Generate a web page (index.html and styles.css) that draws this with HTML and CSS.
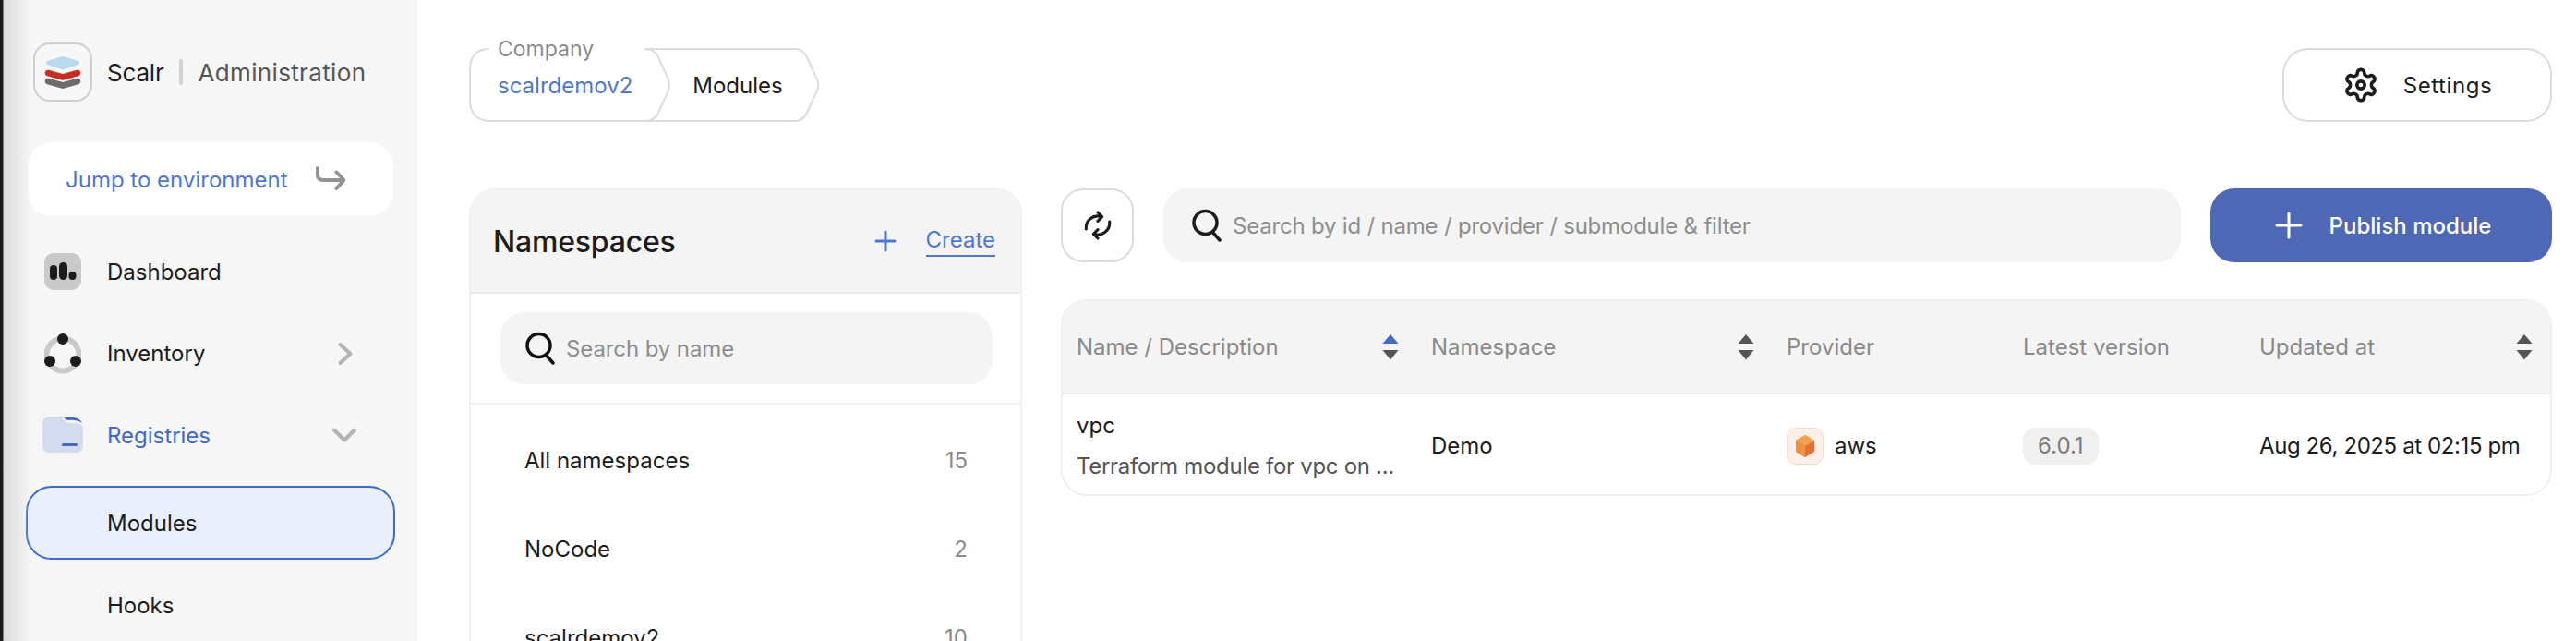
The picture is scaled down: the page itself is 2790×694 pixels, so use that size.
FILE: index.html
```html
<!DOCTYPE html>
<html lang="en">
<head>
<meta charset="utf-8">
<title>Scalr Modules</title>
<link rel="stylesheet" href="styles.css">
</head>
<body>
<aside class="sidebar">
  <div class="brand">
    <span class="logo">
      <svg width="64" height="64" viewBox="0 0 64 64">
        <path d="M32 15 L49 20 Q51.500 22 49 24 L32 29.500 L15 24 Q12.500 22 15 20 Z" fill="#b8d9ef"/>
        <path d="M16 33 L32 37.500 L48 33" fill="none" stroke="#c42f22" stroke-width="6.500" stroke-linecap="round" stroke-linejoin="round"/>
        <path d="M16 42 L32 46.500 L48 42" fill="none" stroke="#6b6b6b" stroke-width="6.500" stroke-linecap="round" stroke-linejoin="round"/>
      </svg>
    </span>
    <span class="brand-name">Scalr</span>
    <span class="brand-sep"></span>
    <span class="brand-sub">Administration</span>
  </div>
  <div class="jump">
    <span>Jump to environment</span>
    <svg width="32" height="28" viewBox="0 0 32 28" fill="none" stroke="#939393" stroke-width="4" stroke-linecap="round" stroke-linejoin="round">
      <path d="M2 2 V9 Q2 15 8 15 H30"/>
      <path d="M22.500 6.500 L30.500 15 L22.500 24"/>
    </svg>
  </div>
  <nav class="nav">
    <div class="nav-item">
      <span class="nav-icon">
        <svg width="40" height="40" viewBox="0 0 40 40">
          <rect width="40" height="40" rx="10" fill="#c9c9c9"/>
          <rect x="6" y="13" width="8" height="16" rx="4" fill="#1c1c1c"/>
          <rect x="16" y="10" width="9" height="19" rx="4.500" fill="#1c1c1c"/>
          <rect x="26.500" y="20" width="8" height="9" rx="4" fill="#1c1c1c"/>
        </svg>
      </span>
      <span class="nav-label">Dashboard</span>
    </div>
    <div class="nav-item">
      <span class="nav-icon">
        <svg width="40" height="44" viewBox="0 0 40 44">
          <circle cx="20" cy="23" r="17.500" fill="none" stroke="#c9c9c9" stroke-width="6"/>
          <circle cx="20" cy="6" r="6" fill="#1c1c1c"/>
          <circle cx="6" cy="30" r="6" fill="#1c1c1c"/>
          <circle cx="34" cy="30" r="6" fill="#1c1c1c"/>
        </svg>
      </span>
      <span class="nav-label">Inventory</span>
      <svg class="nav-caret" width="16" height="24" viewBox="0 0 16 24" fill="none" stroke="#b3b3b3" stroke-width="4" stroke-linecap="round" stroke-linejoin="round">
        <path d="M2.500 2 L13.500 12 L2.500 22"/>
      </svg>
    </div>
    <div class="nav-item nav-open">
      <span class="nav-icon">
        <svg width="44" height="40" viewBox="0 0 44 40">
          <path d="M8 0 H17 Q21 0 23 3 Q25 7 30 7 H36 Q44 7 44 15 V31 Q44 39 36 39 H8 Q0 39 0 31 V8 Q0 0 8 0 Z" fill="#d3dcee"/>
          <path d="M23 1 H33 Q40 1 43 7 Q37 3 27 4 Z" fill="#3f6bc7"/>
          <rect x="21" y="29" width="17" height="3" rx="1.500" fill="#3f6bc7"/>
        </svg>
      </span>
      <span class="nav-label nav-label-open">Registries</span>
      <svg class="nav-caret nav-caret-down" width="26" height="16" viewBox="0 0 26 16" fill="none" stroke="#b3b3b3" stroke-width="4" stroke-linecap="round" stroke-linejoin="round">
        <path d="M2 2.500 L13 13.500 L24 2.500"/>
      </svg>
    </div>
    <div class="nav-sub nav-sub-active">Modules</div>
    <div class="nav-sub">Hooks</div>
  </nav>
</aside>

<main class="main">
  <header class="topbar">
    <div class="crumbs">
      <svg class="crumbs-outline" width="380" height="80" viewBox="0 0 380 80" fill="none" stroke="#dcdcdc" stroke-width="2">
        <path d="M190 1 H352 Q362 1 366 10 L377 34 Q379 40 377 46 L366 70 Q362 79 352 79 H190"/>
        <path d="M22 1 Q1 1 1 24 V56 Q1 79 24 79 H190 Q201 79 205 70 L216 46 Q218 40 216 34 L205 10 Q201 1 190 1"/>
      </svg>
      <span class="crumb-legend">Company</span>
      <a class="crumb crumb-link">scalrdemov2</a>
      <span class="crumb crumb-current">Modules</span>
    </div>
    <button class="btn-settings">
      <svg width="40" height="40" viewBox="0 0 24 24" fill="none" stroke="#1c1c1c" stroke-width="2.200" stroke-linecap="round" stroke-linejoin="round">
        <path d="M12.220 2h-.44a2 2 0 0 0-2 2v.18a2 2 0 0 1-1 1.730l-.43.25a2 2 0 0 1-2 0l-.15-.08a2 2 0 0 0-2.730.73l-.22.38a2 2 0 0 0 .73 2.730l.15.1a2 2 0 0 1 1 1.720v.51a2 2 0 0 1-1 1.740l-.15.09a2 2 0 0 0-.73 2.730l.22.38a2 2 0 0 0 2.730.73l.15-.08a2 2 0 0 1 2 0l.43.25a2 2 0 0 1 1 1.730V20a2 2 0 0 0 2 2h.44a2 2 0 0 0 2-2v-.18a2 2 0 0 1 1-1.730l.43-.25a2 2 0 0 1 2 0l.15.08a2 2 0 0 0 2.730-.73l.22-.39a2 2 0 0 0-.73-2.730l-.15-.08a2 2 0 0 1-1-1.740v-.5a2 2 0 0 1 1-1.740l.15-.09a2 2 0 0 0 .73-2.730l-.22-.38a2 2 0 0 0-2.730-.73l-.15.08a2 2 0 0 1-2 0l-.43-.25a2 2 0 0 1-1-1.730V4a2 2 0 0 0-2-2z"/>
        <circle cx="12" cy="12" r="2.500"/>
      </svg>
      <span class="settings-label">Settings</span>
    </button>
  </header>

  <div class="content">
    <section class="panel">
      <div class="panel-head">
        <h2 class="panel-title">Namespaces</h2>
        <svg class="panel-plus" width="24" height="24" viewBox="0 0 24 24" stroke="#4f77cf" stroke-width="3" stroke-linecap="round">
          <path d="M12 2 V22 M2 12 H22"/>
        </svg>
        <a class="panel-create">Create</a>
      </div>
      <div class="panel-search-wrap">
        <div class="search search-small">
          <svg class="search-icon" width="34" height="36" viewBox="0 0 34 36" fill="none" stroke="#111" stroke-width="3.500" stroke-linecap="round">
            <circle cx="15.500" cy="15" r="12.500"/>
            <path d="M23 25 L31 34"/>
          </svg>
          <span class="placeholder">Search by name</span>
        </div>
      </div>
      <ul class="ns-list">
        <li class="ns-row"><span>All namespaces</span><span class="ns-count">15</span></li>
        <li class="ns-row"><span>NoCode</span><span class="ns-count">2</span></li>
        <li class="ns-row"><span>scalrdemov2</span><span class="ns-count">10</span></li>
      </ul>
    </section>

    <section class="results">
      <div class="toolbar">
        <button class="btn-refresh">
          <svg width="34" height="32" viewBox="0 0 24 24" fill="none" stroke="#1c1c1c" stroke-width="2.300" stroke-linecap="round" stroke-linejoin="round">
            <path d="M2.500 15 A9.500 9.500 0 0 1 15 5"/>
            <path d="M12 1.500 L15.500 5 L12 8.500"/>
            <path d="M21.500 9 A9.500 9.500 0 0 1 9 19"/>
            <path d="M12 15.500 L8.500 19 L12 22.500"/>
          </svg>
        </button>
        <div class="search search-wide">
          <svg class="search-icon" width="34" height="36" viewBox="0 0 34 36" fill="none" stroke="#1c1c1c" stroke-width="3.500" stroke-linecap="round">
            <circle cx="15.500" cy="15" r="12.500"/>
            <path d="M23 25 L31 34"/>
          </svg>
          <span class="placeholder">Search by id / name / provider / submodule &amp; filter</span>
        </div>
        <button class="btn-publish">
          <svg width="30" height="30" viewBox="0 0 30 30" stroke="#fff" stroke-width="3" stroke-linecap="round">
            <path d="M15 2 V28 M2 15 H28"/>
          </svg>
          <span>Publish module</span>
        </button>
      </div>

      <div class="table">
        <div class="thead">
          <div class="th th-sort">Name / Description
            <svg class="sort" width="18" height="28" viewBox="0 0 18 28"><path d="M9 0 L17.500 10 H0.500 Z" fill="#3f6bc7"/><path d="M0.500 17 H17.500 L9 27.500 Z" fill="#555"/></svg>
          </div>
          <div class="th th-sort">Namespace
            <svg class="sort" width="18" height="28" viewBox="0 0 18 28"><path d="M9 0 L17.500 10 H0.500 Z" fill="#555"/><path d="M0.500 17 H17.500 L9 27.500 Z" fill="#555"/></svg>
          </div>
          <div class="th">Provider</div>
          <div class="th">Latest version</div>
          <div class="th th-sort th-last">Updated at
            <svg class="sort" width="18" height="28" viewBox="0 0 18 28"><path d="M9 0 L17.500 10 H0.500 Z" fill="#555"/><path d="M0.500 17 H17.500 L9 27.500 Z" fill="#555"/></svg>
          </div>
        </div>
        <div class="tr">
          <div class="td td-name">
            <div class="mod-name">vpc</div>
            <div class="mod-desc">Terraform module for vpc on ...</div>
          </div>
          <div class="td">Demo</div>
          <div class="td td-provider">
            <span class="aws-badge">
              <svg width="22" height="24" viewBox="0 0 22 24">
                <path d="M11 0 L21 6 V18 L11 24 L1 18 V6 Z" fill="#e26f33"/>
                <path d="M11 0 L21 6 L11 12 L1 6 Z" fill="#f2a34e"/>
                <path d="M1 6 L11 12 V24 L1 18 Z" fill="#ee9142"/>
              </svg>
            </span>
            aws
          </div>
          <div class="td"><span class="chip">6.0.1</span></div>
          <div class="td td-date">Aug 26, 2025 at 02:15 pm</div>
        </div>
      </div>
    </section>
  </div>
</main>
</body>
</html>
```

FILE: styles.css
```css
* { box-sizing: border-box; }

html, body {
  margin: 0;
  height: 694px;
  overflow: hidden;
}

body {
  display: flex;
  width: 2790px;
  background: #fff;
  color: #1c1c1c;
  font-family: Inter, "Liberation Sans", sans-serif;
  font-size: 24px;
}

/* Sidebar */
.sidebar {
  position: relative;
  flex: 0 0 452px;
  height: 694px;
  padding: 46px 24px 0 30px;
  background: #f6f6f6;
}

.sidebar::before {
  content: "";
  position: absolute;
  inset: 0 auto 0 0;
  width: 34px;
  background: linear-gradient(90deg, #1a1a1a 0, #1a1a1a 3px, #dcdcdc 4px, rgba(246, 246, 246, 0) 100%);
  z-index: 2;
  pointer-events: none;
}

.brand {
  display: flex;
  align-items: center;
  height: 64px;
  margin-left: 6px;
}

.logo {
  flex: none;
  width: 64px;
  height: 64px;
  border: 2px solid #cfcfcf;
  border-radius: 18px;
  background: #f7f7f7;
}

.logo svg { display: block; margin: -2px; }

.brand-name {
  margin-left: 16px;
  font-size: 26px;
  letter-spacing: -0.2px;
}

.brand-sep {
  width: 4px;
  height: 28px;
  margin: 0 16px 0 17px;
  border-radius: 2px;
  background: #d2d2d2;
}

.brand-sub {
  font-size: 26px;
  color: #555;
  letter-spacing: 0.35px;
}

.jump {
  display: flex;
  align-items: center;
  justify-content: space-between;
  width: 396px;
  height: 80px;
  margin-top: 44px;
  padding: 0 52px 0 41px;
  border-radius: 26px;
  background: #fff;
  color: #4f77cf;
}

.nav { margin-top: 20px; }

.nav-item {
  position: relative;
  display: flex;
  align-items: center;
  height: 80px;
  margin-bottom: 8.5px;
}

.nav-icon {
  display: flex;
  align-items: center;
  justify-content: center;
  flex: none;
  width: 44px;
  margin-left: 16px;
  margin-right: 26px;
}

.nav-label { flex: 1; }

.nav-label-open { color: #4068c4; }

.nav-caret { margin-right: 46px; }

.nav-caret-down { margin-right: 42px; }

.nav-sub {
  display: flex;
  align-items: center;
  width: 400px;
  height: 80px;
  margin-left: -2px;
  margin-bottom: 9px;
  padding-left: 86px;
  border: 2px solid transparent;
  border-radius: 28px;
}

.nav-sub-active {
  margin-top: 15px;
  background: #e9effb;
  border-color: #3a6bd0;
}

/* Main */
.main {
  flex: 1;
  min-width: 0;
  padding: 52px 26px 0 56px;
}

.topbar {
  display: flex;
  align-items: flex-start;
  justify-content: space-between;
  height: 80px;
}

.crumbs {
  position: relative;
  display: flex;
  align-items: center;
  width: 380px;
  height: 80px;
}

.crumbs-outline {
  position: absolute;
  inset: 0;
}

.crumb-legend {
  position: absolute;
  top: -13px;
  left: 22px;
  padding: 0 9px;
  background: #fff;
  color: #8a8a8a;
  font-size: 23px;
  line-height: 28px;
}

.crumb { position: relative; }

.crumb-link {
  margin-left: 31px;
  color: #4f77cf;
}

.crumb-current { margin-left: 65px; }

.btn-settings {
  display: flex;
  align-items: center;
  justify-content: center;
  gap: 26px;
  width: 292px;
  height: 80px;
  border: 2px solid #dcdcdc;
  border-radius: 28px;
  background: #fff;
  color: #1c1c1c;
  font: inherit;
}

.settings-label { letter-spacing: 0.6px; }

.content {
  display: flex;
  gap: 42px;
  margin-top: 72px;
}

/* Namespaces */
.panel {
  flex: 0 0 599px;
  height: 560px;
  border: 2px solid #f0f0f0;
  border-radius: 28px;
}

.panel-head {
  display: flex;
  align-items: center;
  height: 112px;
  padding: 0 27px 0 24px;
  background: #f4f4f4;
  border-bottom: 2px solid #e9e9e9;
  border-radius: 26px 26px 0 0;
}

.panel-title {
  flex: 1;
  margin: 0;
  font-size: 32px;
  font-weight: 500;
  letter-spacing: -0.2px;
}

.panel-plus { margin-right: 32px; }

.panel-create {
  padding-bottom: 2px;
  border-bottom: 2px solid #4f77cf;
  color: #4f77cf;
}

.panel-search-wrap {
  padding: 20px 30px 20px 32px;
  border-bottom: 2px solid #f0f0f0;
}

.search {
  display: flex;
  align-items: center;
  height: 80px;
  border-radius: 26px;
  background: #f4f4f4;
  color: #8e8e8e;
}

.search-small {
  height: 78px;
  padding-left: 26px;
  letter-spacing: -0.1px;
}

.search-icon { flex: none; margin-right: 11px; }

.ns-list {
  margin: 12px 0 0;
  padding: 0;
  list-style: none;
}

.ns-row {
  display: flex;
  align-items: center;
  justify-content: space-between;
  height: 96px;
  padding: 0 57px 0 58px;
}

.ns-count { color: #8a8a8a; }

/* Results */
.results {
  flex: 1;
  min-width: 0;
}

.toolbar {
  display: flex;
  align-items: stretch;
  height: 80px;
}

.btn-refresh {
  display: flex;
  align-items: center;
  justify-content: center;
  flex: 0 0 79px;
  padding: 0;
  border: 2px solid #dcdcdc;
  border-radius: 24px;
  background: #fff;
}

.search-wide {
  flex: 1;
  margin: 0 32px;
  padding-left: 30px;
  letter-spacing: -0.2px;
}

.btn-publish {
  display: flex;
  align-items: center;
  justify-content: center;
  gap: 29px;
  flex: 0 0 370px;
  padding: 0 0 0 4px;
  border: 0;
  border-radius: 26px;
  background: #4f68b5;
  color: #fff;
  font: inherit;
  font-weight: 500;
}

.table {
  margin-top: 40px;
  border: 2px solid #f0f0f0;
  border-radius: 28px;
}

.thead, .tr {
  display: grid;
  grid-template-columns: 384px 385px 256px 256px 1fr;
  padding-left: 15px;
}

.thead {
  align-items: center;
  height: 101px;
  background: #f4f4f4;
  border-bottom: 2px solid #e9e9e9;
  border-radius: 26px 26px 0 0;
  color: #8a8a8a;
}

.th-sort {
  display: flex;
  align-items: center;
  justify-content: space-between;
  padding-right: 35px;
}

.th-last { padding-right: 19px; }

.tr {
  align-items: center;
  height: 108px;
  padding-top: 3px;
}

.mod-name { margin-bottom: 15px; }

.mod-desc {
  color: #555;
  letter-spacing: -0.3px;
}

.td-provider {
  display: flex;
  align-items: center;
  gap: 12px;
}

.aws-badge {
  display: flex;
  align-items: center;
  justify-content: center;
  width: 40px;
  height: 40px;
  border: 1px solid #f8d9c6;
  border-radius: 10px;
  background: #fdf0e8;
}

.chip {
  display: inline-flex;
  align-items: center;
  height: 40px;
  padding: 0 16px;
  border-radius: 14px;
  background: #f0f0f0;
  color: #7d7d7d;
}

.td-date { letter-spacing: -0.4px; }
```
